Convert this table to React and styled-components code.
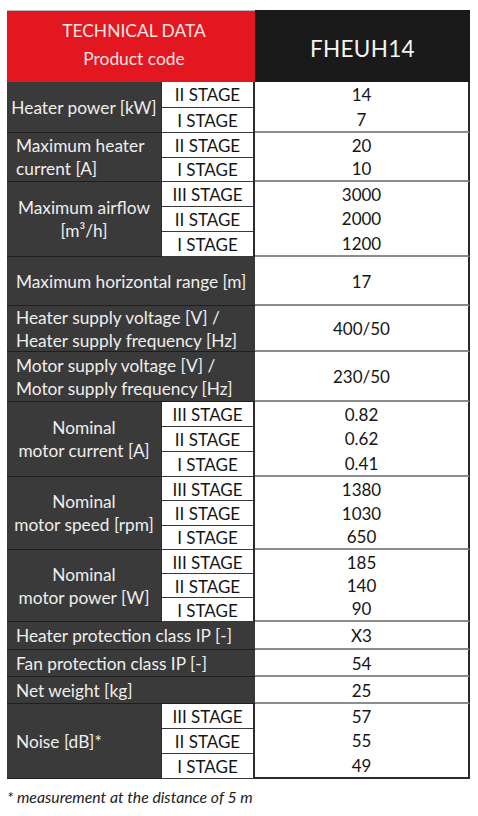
import React from "react";
import styled, { createGlobalStyle } from "styled-components";

const Global = createGlobalStyle`
  html, body { margin: 0; padding: 0; background: #ffffff; }
  body { font-family: Lato, "Open Sans", "Liberation Sans", sans-serif; }
  * { box-sizing: border-box; }
`;

const Page = styled.div`
  padding: 10px 0 0 7px;
  width: 478px;
`;

const Table = styled.div`
  width: 463px;
  display: flex;
  flex-direction: column;
`;

const Header = styled.div`
  display: flex;
  height: 72px;
`;

const HeaderLeft = styled.div`
  width: 248px;
  background: #e2171f;
  color: #fbe4e4;
  display: flex;
  flex-direction: column;
  align-items: center;
  justify-content: center;
  font-size: 17.4px;
  line-height: 28px;
  padding-left: 6px;
  padding-bottom: 4px;
  border-top: 1px solid #b9b9b9;
`;

const HeaderRight = styled.div`
  flex: 1;
  background: #1b1a1a;
  color: #f4f4f4;
  display: flex;
  align-items: center;
  justify-content: center;
  font-size: 22.5px;
  letter-spacing: 0.3px;
  padding-top: 4px;
`;

const Group = styled.div`
  display: flex;
  height: ${(p) => p.$h}px;
`;

const Label = styled.div`
  width: ${(p) => (p.$wide ? 248 : 154)}px;
  background: #3b3a3a;
  color: #eeeeee;
  border-bottom: 1px solid #1e1e1e;
  display: flex;
  align-items: center;
  justify-content: ${(p) => (p.$center ? "center" : "flex-start")};
  text-align: ${(p) => (p.$center ? "center" : "left")};
  padding: 0 0 0 ${(p) => (p.$center ? 0 : 9)}px;
  font-size: 17.3px;
  line-height: 23px;
  white-space: pre-line;
`;

const Stages = styled.div`
  width: 94px;
  display: flex;
  flex-direction: column;
  border-left: 1px solid #2a2a2a;
  border-right: 2px solid #2a2a2a;
`;

const Stage = styled.div`
  flex: 1;
  background: #ffffff;
  color: #151515;
  border-bottom: 1px solid #3a3a3a;
  display: flex;
  align-items: center;
  justify-content: center;
  font-size: 17px;
  padding-top: 1px;
`;

const Value = styled.div`
  flex: 1;
  background: #ffffff;
  color: #151515;
  border-right: 2px solid #2a2a2a;
  border-bottom: ${(p) => (p.$last ? "2px solid #2a2a2a" : "2px solid #8c8c8c")};
  display: flex;
  flex-direction: column;
  font-size: 17px;
`;

const ValueLine = styled.div`
  flex: 1;
  display: flex;
  align-items: center;
  justify-content: center;
  padding-top: 1px;
`;

const Note = styled.div`
  margin-top: 8px;
  font-style: italic;
  font-size: 15.8px;
  color: #222;
`;

const rows = [
  { label: "Heater power [kW]", center: true, h: 51, stages: ["II STAGE", "I STAGE"], values: ["14", "7"] },
  { label: "Maximum heater\ncurrent [A]", h: 49, stages: ["II STAGE", "I STAGE"], values: ["20", "10"] },
  { label: "Maximum airflow\n[m³/h]", center: true, h: 75, stages: ["III STAGE", "II STAGE", "I STAGE"], values: ["3000", "2000", "1200"] },
  { label: "Maximum horizontal range [m]", h: 49, values: ["17"] },
  { label: "Heater supply voltage [V] /\nHeater supply frequency [Hz]", h: 46, values: ["400/50"] },
  { label: "Motor supply voltage [V] /\nMotor supply frequency [Hz]", h: 50, values: ["230/50"] },
  { label: "Nominal\nmotor current [A]", center: true, h: 75, stages: ["III STAGE", "II STAGE", "I STAGE"], values: ["0.82", "0.62", "0.41"] },
  { label: "Nominal\nmotor speed [rpm]", center: true, h: 73, stages: ["III STAGE", "II STAGE", "I STAGE"], values: ["1380", "1030", "650"] },
  { label: "Nominal\nmotor power [W]", center: true, h: 72, stages: ["III STAGE", "II STAGE", "I STAGE"], values: ["185", "140", "90"] },
  { label: "Heater protection class IP [-]", h: 28, values: ["X3"] },
  { label: "Fan protection class IP [-]", h: 27, values: ["54"] },
  { label: "Net weight [kg]", h: 27, values: ["25"] },
  { label: "Noise [dB]*", h: 75, stages: ["III STAGE", "II STAGE", "I STAGE"], values: ["57", "55", "49"] },
];

export default function App() {
  return (
    <>
      <Global />
      <Page>
        <Table>
          <Header>
            <HeaderLeft>
              <span>TECHNICAL DATA</span>
              <span>Product code</span>
            </HeaderLeft>
            <HeaderRight>FHEUH14</HeaderRight>
          </Header>
          {rows.map((r, i) => (
            <Group key={i} $h={r.h}>
              <Label $wide={!r.stages} $center={r.center}>{r.label}</Label>
              {r.stages && (
                <Stages>
                  {r.stages.map((s) => (
                    <Stage key={s}>{s}</Stage>
                  ))}
                </Stages>
              )}
              <Value $last={i === rows.length - 1}>
                {r.values.map((v) => (
                  <ValueLine key={v}>{v}</ValueLine>
                ))}
              </Value>
            </Group>
          ))}
        </Table>
        <Note>* measurement at the distance of 5 m</Note>
      </Page>
    </>
  );
}
